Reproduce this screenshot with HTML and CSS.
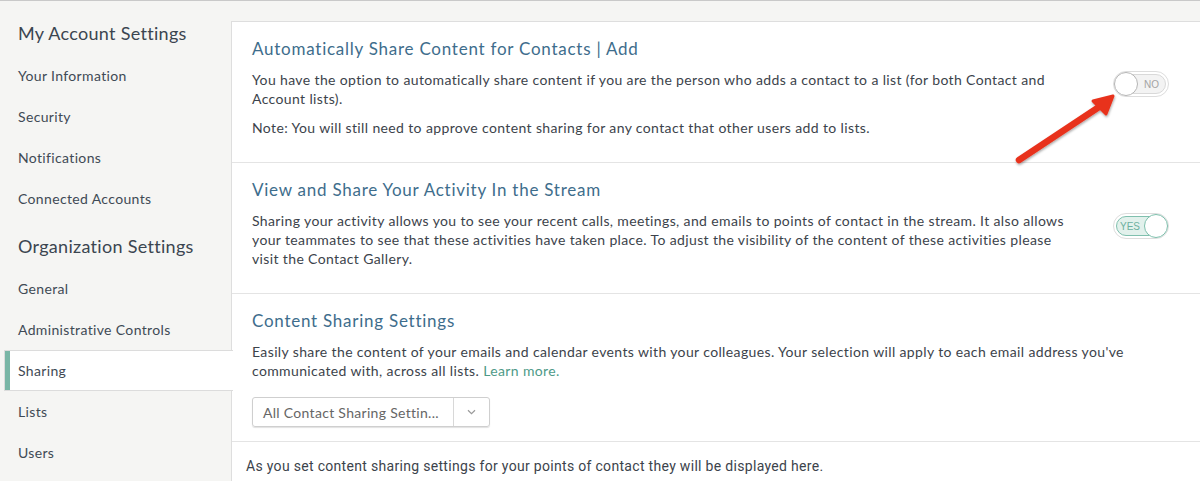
FILE: index.html
```html
<!DOCTYPE html>
<html>
<head>
<meta charset="utf-8">
<link rel="stylesheet" href="styles.css">
</head>
<body>
<div class="page">
  <nav class="sidebar">
    <div class="side-heading first">My Account Settings</div>
    <div class="side-item">Your Information</div>
    <div class="side-item">Security</div>
    <div class="side-item">Notifications</div>
    <div class="side-item">Connected Accounts</div>
    <div class="side-heading">Organization Settings</div>
    <div class="side-item">General</div>
    <div class="side-item">Administrative Controls</div>
    <div class="side-item active">Sharing</div>
    <div class="side-item">Lists</div>
    <div class="side-item">Users</div>
  </nav>
  <main class="panel">
    <section class="section with-toggle">
      <div class="section-body">
        <h2 class="title">Automatically Share Content for Contacts | Add</h2>
        <p class="text">You have the option to automatically share content if you are the person who adds a contact to a list (for both Contact and Account lists).</p>
        <p class="text note">Note: You will still need to approve content sharing for any contact that other users add to lists.</p>
      </div>
      <div class="toggle-col">
        <div class="toggle off"><span class="track"><span class="label">NO</span></span><span class="knob"></span></div>
      </div>
    </section>
    <section class="section with-toggle">
      <div class="section-body">
        <h2 class="title">View and Share Your Activity In the Stream</h2>
        <p class="text">Sharing your activity allows you to see your recent calls, meetings, and emails to points of contact in the stream. It also allows your teammates to see that these activities have taken place. To adjust the visibility of the content of these activities please visit the Contact Gallery.</p>
      </div>
      <div class="toggle-col second">
        <div class="toggle on"><span class="track"><span class="label">YES</span></span><span class="knob"></span></div>
      </div>
    </section>
    <section class="section plain">
      <div class="section-body">
        <h2 class="title">Content Sharing Settings</h2>
        <p class="text">Easily share the content of your emails and calendar events with your colleagues. Your selection will apply to each email address you've communicated with, across all lists. <a class="link">Learn more.</a></p>
        <div class="select">
          <span class="select-value">All Contact Sharing Settin...</span>
          <span class="select-arrow"><svg width="9" height="6" viewBox="0 0 9 6"><path d="M1 1.2 L4.5 4.6 L8 1.2" fill="none" stroke="#9a9a9a" stroke-width="1.2"/></svg></span>
        </div>
      </div>
    </section>
    <section class="footer-note">As you set content sharing settings for your points of contact they will be displayed here.</section>
  </main>
  <svg class="arrow" width="130" height="90" viewBox="0 0 130 90">
    <defs>
      <filter id="sh" x="-20%" y="-20%" width="140%" height="140%">
        <feDropShadow dx="0.5" dy="1.5" stdDeviation="1.2" flood-color="#000" flood-opacity="0.35"/>
      </filter>
    </defs>
    <g filter="url(#sh)">
      <line x1="19" y1="74" x2="99" y2="21" stroke="#e8321e" stroke-width="6.5" stroke-linecap="round"/>
      <path d="M93 15 L113 10 L106 28 Z" fill="#e8321e" stroke="#e8321e" stroke-width="3" stroke-linejoin="round"/>
    </g>
  </svg>
</div>
</body>
</html>
```

FILE: styles.css
```css
* { box-sizing: border-box; }
html, body {
  margin: 0;
  padding: 0;
}
body {
  background: #f5f5f3;
  border-top: 1px solid #c9c9c9;
  font-family: Lato, "Liberation Sans", sans-serif;
  color: #3c434b;
  width: 1200px;
  height: 481px;
  overflow: hidden;
}
.page {
  position: relative;
  display: flex;
}
.sidebar {
  width: 231px;
  flex: none;
  padding-top: 11px;
  position: relative;
  z-index: 2;
}
.side-heading {
  height: 43px;
  line-height: 43px;
  padding-left: 18px;
  font-size: 18px;
  color: #3b4550;
  letter-spacing: 0.3px;
}
.side-heading:not(.first) { margin-top: 6px; }
.side-item {
  height: 41px;
  line-height: 41px;
  padding-left: 18px;
  font-size: 14px;
  color: #3f4a55;
  letter-spacing: 0.35px;
}
.side-item.active {
  background: #fff;
  margin-left: 4px;
  margin-right: -2px;
  padding-left: 13px;
  border: 1px solid #dcdcdc;
  border-right: none;
  line-height: 39px;
  box-shadow: inset 5px 0 0 #79b6a6;
}
.panel {
  flex: 1;
  margin-top: 20px;
  background: #fff;
  border-top: 1px solid #dedede;
  border-left: 1px solid #dedede;
  min-height: 470px;
}
.section {
  display: flex;
  border-bottom: 1px solid #e4e4e4;
}
.section-body {
  padding: 15px 0 25px 20px;
}
.with-toggle .section-body { width: 848px; }
.plain .section-body { width: 920px; padding-bottom: 14px; }
.title {
  margin: 0;
  font-weight: normal;
  font-size: 17px;
  line-height: 24px;
  color: #3e6d8c;
  letter-spacing: 0.75px;
}
.text {
  margin: 9px 0 0;
  font-size: 14px;
  line-height: 19px;
  color: #3c434b;
  letter-spacing: 0.37px;
}
.text.note { margin-top: 10px; }
.link { color: #4e9a88; }
.toggle-col {
  flex: 1;
  padding-top: 49px;
  padding-left: 33px;
}
.toggle-col.second { padding-top: 50px; }
.toggle {
  position: relative;
  width: 56px;
  height: 26px;
  border: 1px solid #dddddd;
  border-radius: 13px;
  padding: 2px;
}
.track {
  display: flex;
  align-items: center;
  width: 100%;
  height: 100%;
  border-radius: 10px;
  font-family: "Liberation Sans", Arial, sans-serif;
  font-size: 10px;
}
.toggle.off .track {
  background: #f3f3f3;
  border: 1px solid #d9d9d9;
  justify-content: flex-end;
  padding-right: 6px;
  color: #a3a3a3;
}
.toggle.on .track {
  background: #e2f1ec;
  border: 1px solid #80c0ae;
  padding-left: 3px;
  color: #6db09e;
}
.knob {
  position: absolute;
  top: 0px;
  width: 24px;
  height: 24px;
  border-radius: 50%;
  background: #fff;
}
.toggle.off .knob { left: 0; border: 1.5px solid #b5b5b5; }
.toggle.on .knob { right: 0; border: 1.5px solid #7dbfac; }
.select {
  display: flex;
  margin-top: 17px;
  width: 238px;
  height: 30px;
  border: 1px solid #cfcfcf;
  border-radius: 3px;
  box-shadow: 0 1px 1px rgba(0,0,0,0.12);
  font-size: 14px;
  color: #666;
  align-items: center;
}
.select-value {
  flex: 1;
  padding-left: 10px;
  letter-spacing: 0.3px;
}
.select-arrow {
  width: 36px;
  height: 100%;
  border-left: 1px solid #d8d8d8;
  display: flex;
  align-items: center;
  justify-content: center;
}
.footer-note {
  padding: 15px 0 0 14px;
  font-family: Roboto, "Liberation Sans", sans-serif;
  font-size: 14px;
  line-height: 19px;
  color: #3c434b;
  letter-spacing: 0.31px;
}
.arrow {
  position: absolute;
  left: 1000px;
  top: 85px;
  z-index: 5;
}
```
